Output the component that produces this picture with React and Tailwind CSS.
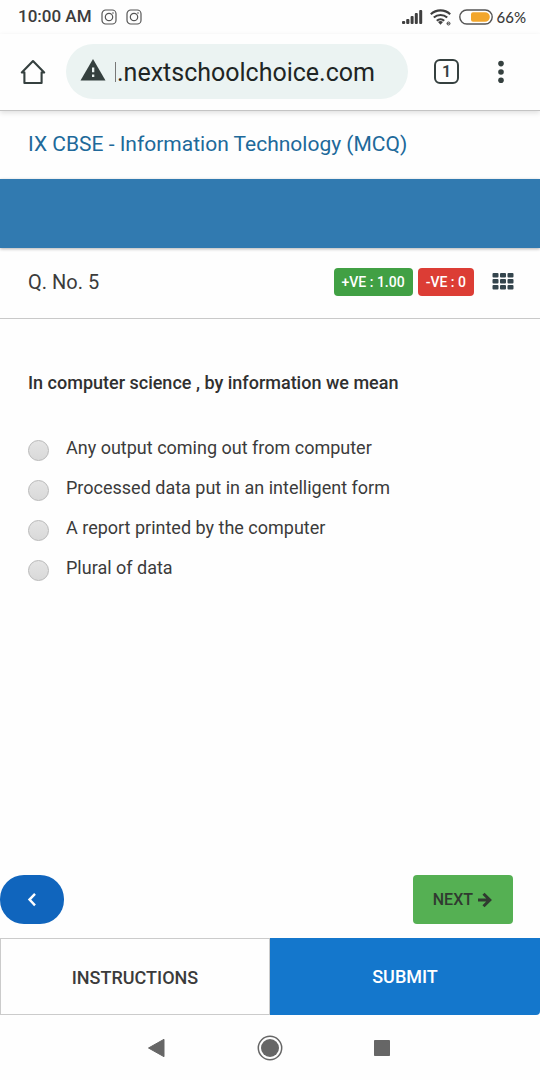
const options = [
  'Any output coming out from computer',
  'Processed data put in an intelligent form',
  'A report printed by the computer',
  'Plural of data',
];

function InstagramIcon() {
  return (
    <svg viewBox="0 0 16 16" className="size-4" fill="none" stroke="#555" aria-hidden="true">
      <rect x="1" y="1" width="14" height="14" rx="3.8" strokeWidth="1.2" />
      <circle cx="8" cy="8" r="3.7" strokeWidth="1.2" />
      <circle cx="12" cy="4" r="0.8" fill="#555" stroke="none" />
    </svg>
  );
}

function StatusBar() {
  return (
    <div className="flex h-[34px] items-center justify-between pl-[18px] pr-[14px] text-[#3c3c3c]">
      <div className="flex items-center gap-[9px]">
        <span className="text-[17px] font-medium">10:00 AM</span>
        <InstagramIcon />
        <InstagramIcon />
      </div>
      <div className="flex items-center">
        <svg viewBox="0 0 22 16" className="mr-[7px] h-4 w-[22px]" fill="#3f3f3f" aria-hidden="true">
          <rect x="1" y="12" width="3.2" height="3" rx="1" />
          <rect x="5.2" y="10" width="3.2" height="5" rx="1" />
          <rect x="9.6" y="7" width="3" height="8" rx="1" />
          <rect x="13.8" y="4" width="3" height="11" rx="1" />
          <rect x="18.2" y="1" width="3" height="14" rx="1" />
        </svg>
        <svg viewBox="0 0 22 17" className="mr-[7px] h-[17px] w-[22px]" fill="none" stroke="#3f3f3f" aria-hidden="true">
          <path d="M.8 5.2a14.2 14.2 0 0 1 19.4 0M3.8 8.6a9.8 9.8 0 0 1 13.4 0M6.8 11.8a5.4 5.4 0 0 1 7.4 0" strokeWidth="2.1" />
          <path d="M8 13a3.8 3.8 0 0 1 5 0L10.5 15.7z" fill="#3f3f3f" stroke="none" />
          <circle cx="18.5" cy="14.5" r="1.5" strokeWidth="1" />
          <path d="M17 14.5h2.6" strokeWidth=".7" />
        </svg>
        <svg viewBox="0 0 34 16" className="mr-1 h-4 w-[34px]" aria-hidden="true">
          <rect x=".8" y="1" width="32.4" height="14" rx="7" fill="#fff" stroke="#555" strokeWidth="1.4" />
          <path d="M14 3.2h12a4.8 4.8 0 0 1 0 9.6H14a2 2 0 0 1-2-2V5.2a2 2 0 0 1 2-2z" fill="#f2a62c" />
        </svg>
        <span className="font-[Lato,sans-serif] text-[15px] font-medium">66%</span>
      </div>
    </div>
  );
}

function BrowserBar() {
  return (
    <div className="relative flex h-[77px] items-center border-b border-[#c4c4c4] pb-px pl-5 pr-8 shadow-[0_2px_5px_rgba(0,0,0,0.12)]">
      <button type="button" aria-label="Home" className="mr-5">
        <svg viewBox="0 0 26 26" className="size-[26px]" fill="none" stroke="#35403f" strokeWidth="2.1" strokeLinejoin="round" strokeLinecap="round">
          <path d="M1.8 13.4 13 2 24.2 13.4H21.6V24H4.4V13.4Z" />
        </svg>
      </button>
      <div className="flex h-[55px] min-w-0 flex-1 items-center rounded-full bg-[#ebf3f2] pl-[14px] pr-5">
        <svg viewBox="0 0 26 22" className="mr-[9px] mb-1 h-[22px] w-[26px] shrink-0" aria-hidden="true">
          <path d="M13 0 25.5 21.5H.5z" fill="#35403f" />
          <path d="M12 8.5h2.3v4.8H12zM12 15.5h2.3v2.4H12z" fill="#ebf3f2" />
        </svg>
        <span className="mr-px h-5 w-px shrink-0 bg-[#777]" />
        <input
          type="text"
          aria-label="Address"
          defaultValue=".nextschoolchoice.com"
          className="min-w-0 flex-1 bg-transparent pt-[2px] text-[25px] text-[#202524] outline-none"
        />
      </div>
      <button type="button" aria-label="Tabs" className="ml-[26px] mr-[35px] size-[25px] rounded-md border-2 border-[#35403f] text-base leading-5 font-semibold text-[#35403f]">
        1
      </button>
      <button type="button" aria-label="Menu">
        <svg viewBox="0 0 14 24" className="h-6 w-[14px]" fill="#35403f">
          <circle cx="7" cy="3.6" r="2.8" />
          <circle cx="7" cy="12" r="2.8" />
          <circle cx="7" cy="20.2" r="2.8" />
        </svg>
      </button>
    </div>
  );
}

function QuestionBar() {
  return (
    <div className="flex h-[71px] items-center border-b border-[#c9c9c9] pb-[3px] pl-7 pr-[26px]">
      <h2 className="flex-1 pt-px text-xl text-[#3b3b3b]">Q. No. 5</h2>
      <div className="flex gap-[5px] text-sm leading-7 font-medium text-white">
        <span className="rounded-sm bg-[#41a044] px-2">+VE : 1.00</span>
        <span className="rounded-sm bg-[#dc3d35] px-2">-VE : 0</span>
      </div>
      <button type="button" aria-label="All questions" className="ml-[18px]">
        <svg viewBox="0 0 22 17" className="h-[17px] w-[22px]" fill="#34454d">
          {[0, 6, 12].map((y) =>
            [0.5, 8, 15.5].map((x) => <rect key={`${x}-${y}`} x={x} y={y} width="6" height="4.6" rx="1" />)
          )}
        </svg>
      </button>
    </div>
  );
}

function SystemNav() {
  return (
    <nav aria-label="System" className="flex h-[65px] items-center justify-center gap-[88px]">
      <button type="button" aria-label="Back">
        <svg viewBox="0 0 24 26" className="h-[26px] w-6" fill="#666">
          <path d="M3.5 13 19 4.3V21.7z" stroke="#666" strokeLinejoin="round" />
        </svg>
      </button>
      <button type="button" aria-label="Home screen">
        <svg viewBox="0 0 26 26" className="size-[26px]">
          <circle cx="13" cy="13" r="11.7" fill="none" stroke="#666" strokeWidth="1.5" />
          <circle cx="13" cy="13" r="9" fill="#666" />
        </svg>
      </button>
      <button type="button" aria-label="Recent apps">
        <svg viewBox="0 0 24 26" className="h-[26px] w-6" fill="#666">
          <rect x="3" y="5" width="16" height="16" rx=".8" />
        </svg>
      </button>
    </nav>
  );
}

export default function App() {
  return (
    <div className="flex min-h-screen flex-col bg-[#fefefe] font-[Roboto,sans-serif]">
      <StatusBar />
      <BrowserBar />
      <h1 className="px-7 pt-[18px] pb-[20px] text-[21px] leading-[30px] text-[#20699a]">
        IX CBSE - Information Technology (MCQ)
      </h1>
      <div className="relative h-[69px] bg-[#317ab0] shadow-[0_1px_3px_rgba(0,0,0,0.3)]" />
      <QuestionBar />
      <main className="flex flex-1 flex-col">
        <form className="flex-1 px-7 pt-[52px]">
          <fieldset>
            <legend className="text-lg leading-6 font-medium text-[#303030]">
              In computer science , by information we mean
            </legend>
            <div className="mt-[35px] text-lg text-[#3b3b3b]">
              {options.map((option) => (
                <label key={option} className="flex h-10 items-start">
                  <input
                    type="radio"
                    name="answer"
                    className="mt-[10px] mr-[17px] size-[21px] shrink-0 appearance-none rounded-full border border-[#b9b9b9] bg-linear-to-b from-[#e4e4e4] to-[#d9d9d9] checked:border-[6px] checked:border-[#1565c0]"
                  />
                  <span className="pt-1">{option}</span>
                </label>
              ))}
            </div>
          </fieldset>
        </form>
        <div className="flex items-center justify-between pr-[27px] pb-[14px]">
          <button type="button" aria-label="Previous question" className="flex h-[49px] w-16 items-center justify-center rounded-3xl bg-[#1065bd]">
            <svg viewBox="0 0 12 16" className="h-4 w-3" fill="none" stroke="#fff" strokeWidth="2.4">
              <path d="M9 1.8 3.5 7.6 9 13.4" />
            </svg>
          </button>
          <button type="button" className="flex h-[49px] items-center gap-1 rounded-sm bg-[#55b053] px-5 text-base font-medium text-[#303a30]">
            NEXT
            <svg viewBox="0 0 16 16" className="size-4" fill="none" stroke="#303a30" strokeWidth="3">
              <path d="M1 8h11.5M6.5 1.8 12.8 8l-6.3 6.2" />
            </svg>
          </button>
        </div>
      </main>
      <div className="grid h-[77px] grid-cols-2 text-lg font-medium">
        <button type="button" className="border border-[#cbcbcb] pt-[2px] text-[#3b3b3b]">INSTRUCTIONS</button>
        <button type="button" className="rounded-br-sm bg-[#1477cc] text-white">SUBMIT</button>
      </div>
      <SystemNav />
    </div>
  );
}
